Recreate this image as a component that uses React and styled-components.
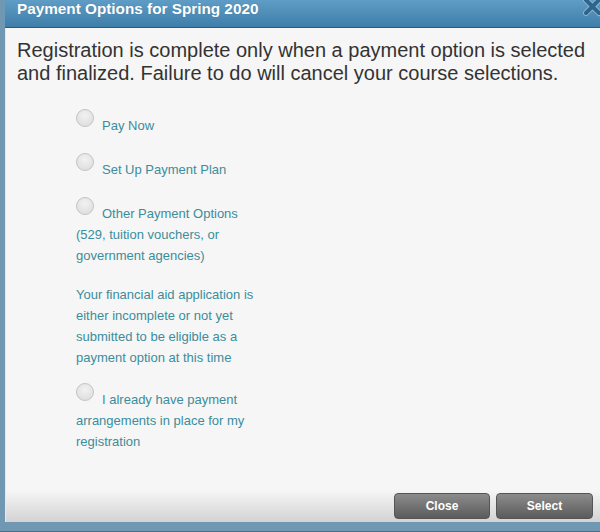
import React from 'react';
import styled, { createGlobalStyle } from 'styled-components';

const GlobalStyle = createGlobalStyle`
    html, body {
        margin: 0;
        padding: 0;
        background: #7098b3;
    }
    body {
        font-family: "Liberation Sans", Arial, sans-serif;
    }
`;

const Frame = styled.div`
    width: 600px;
    height: 532px;
    box-sizing: border-box;
    padding: 0 0 9px 5px;
    display: flex;
    flex-direction: column;
    background: #7098b3;
    border-bottom: 1px solid #4f6f85;
    overflow: hidden;
`;

const TitleBar = styled.div`
    position: relative;
    height: 27px;
    flex: none;
    display: flex;
    align-items: flex-start;
    padding-left: 12px;
    background: linear-gradient(to bottom, #5f9dc6, #3f7ea9);
    border-bottom: 1px solid #2b5a7c;
    color: #fff;
    font-size: 15.3px;
    font-weight: bold;
    line-height: 18px;
    text-shadow: 0 0 1px rgba(0, 0, 0, 0.2);
`;

const CloseX = styled.svg`
    position: absolute;
    top: -3px;
    right: -4px;
`;

const Body = styled.div`
    flex: 1;
    min-height: 0;
    display: flex;
    flex-direction: column;
    background: #f6f6f6;
    border-left: 1px solid #e3e9ee;
`;

const Content = styled.div`
    flex: 1;
    min-height: 0;
    overflow: hidden;
    padding: 11px 0 0 11px;
`;

const Intro = styled.p`
    margin: 0;
    font-size: 20px;
    line-height: 23px;
    color: #333;
`;

const Options = styled.div`
    width: 195px;
    margin: 24px 0 0 59px;
    font-size: 13px;
    line-height: 21px;
    color: #3b8d9c;
`;

const Option = styled.div`
    margin-bottom: ${(p) => (p.gap === undefined ? 17 : p.gap)}px;
`;

const Note = styled.div`
    margin: 18px 0 15px;
`;

const Radio = styled.span`
    display: inline-block;
    width: 16px;
    height: 16px;
    border-radius: 50%;
    border: 1px solid #c4c4c4;
    background: radial-gradient(circle at 50% 35%, #f2f2f2, #dadada);
    vertical-align: 3px;
    margin-right: 8px;
`;

const Footer = styled.div`
    height: 32px;
    flex: none;
    display: flex;
    justify-content: flex-end;
    align-items: flex-start;
    gap: 6px;
    padding: 3px 7px 0 0;
    box-sizing: border-box;
    background: linear-gradient(to bottom, #f6f6f6, #d3d3d3);
`;

const Button = styled.button`
    width: ${(p) => p.w}px;
    height: 26px;
    border: 1px solid #555;
    border-radius: 4px;
    background: linear-gradient(to bottom, #8c8c8c, #5b5b5b);
    color: #fff;
    font-family: "Liberation Sans", Arial, sans-serif;
    font-size: 12px;
    font-weight: bold;
    padding: 0;
`;

const App = () => {
    return (
        <>
            <GlobalStyle />
            <Frame>
                <TitleBar>
                    Payment Options for Spring 2020
                    <CloseX width="22" height="20" viewBox="0 0 22 20">
                        <path d="M4 3 L17 16 M17 3 L4 16" stroke="#8fb8d4" strokeWidth="6" strokeLinecap="round" />
                        <path d="M4 3 L17 16 M17 3 L4 16" stroke="#2f658c" strokeWidth="4" strokeLinecap="round" />
                    </CloseX>
                </TitleBar>
                <Body>
                    <Content>
                        <Intro>
                            Registration is complete only when a payment option is selected
                            and finalized. Failure to do will cancel your course selections.
                        </Intro>
                        <Options>
                            <Option><Radio />Pay Now</Option>
                            <Option><Radio />Set Up Payment Plan</Option>
                            <Option gap={0}>
                                <Radio />Other Payment Options (529, tuition vouchers, or government agencies)
                            </Option>
                            <Note>
                                Your financial aid application is either incomplete or not yet
                                submitted to be eligible as a payment option at this time
                            </Note>
                            <Option>
                                <Radio />I already have payment arrangements in place for my registration
                            </Option>
                        </Options>
                    </Content>
                    <Footer>
                        <Button w={96}>Close</Button>
                        <Button w={97}>Select</Button>
                    </Footer>
                </Body>
            </Frame>
        </>
    );
};

export default App;
